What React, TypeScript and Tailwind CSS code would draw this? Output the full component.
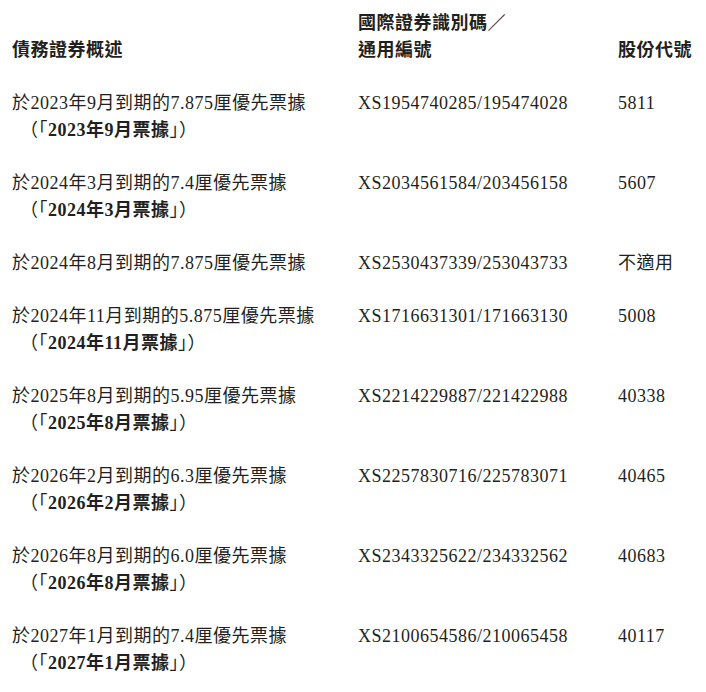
import React from 'react';

type Note = {
  title: string;
  short?: string;
  isin: string;
  code: string;
};

const notes: Note[] = [
  { title: '於2023年9月到期的7.875厘優先票據', short: '2023年9月票據', isin: 'XS1954740285/195474028', code: '5811' },
  { title: '於2024年3月到期的7.4厘優先票據', short: '2024年3月票據', isin: 'XS2034561584/203456158', code: '5607' },
  { title: '於2024年8月到期的7.875厘優先票據', isin: 'XS2530437339/253043733', code: '不適用' },
  { title: '於2024年11月到期的5.875厘優先票據', short: '2024年11月票據', isin: 'XS1716631301/171663130', code: '5008' },
  { title: '於2025年8月到期的5.95厘優先票據', short: '2025年8月票據', isin: 'XS2214229887/221422988', code: '40338' },
  { title: '於2026年2月到期的6.3厘優先票據', short: '2026年2月票據', isin: 'XS2257830716/225783071', code: '40465' },
  { title: '於2026年8月到期的6.0厘優先票據', short: '2026年8月票據', isin: 'XS2343325622/234332562', code: '40683' },
  { title: '於2027年1月到期的7.4厘優先票據', short: '2027年1月票據', isin: 'XS2100654586/210065458', code: '40117' },
];

export default function App() {
  return (
    <div className="min-h-[692px] w-[706px] bg-white pl-[12px] pt-[10px] font-['Liberation_Serif','Noto_Sans_CJK_TC',serif] text-[18px] leading-[27px] tracking-[0.5px] text-[#231f20]">
      {/* header */}
      <div className="mb-[26px] grid grid-cols-[346px_260px_1fr] items-end font-bold">
        <div>債務證券概述</div>
        <div>
          <div>國際證券識別碼／</div>
          <div>通用編號</div>
        </div>
        <div>股份代號</div>
      </div>

      {notes.map((n) => (
        <div key={n.isin} className="mb-[26px] grid grid-cols-[346px_260px_1fr]">
          <div>
            <div className="whitespace-nowrap">{n.title}</div>
            {n.short && (
              <div className="whitespace-nowrap pl-[8px]">
                （「<span className="font-bold">{n.short}</span>」）
              </div>
            )}
          </div>
          <div className="whitespace-nowrap">{n.isin}</div>
          <div>{n.code}</div>
        </div>
      ))}
    </div>
  );
}
